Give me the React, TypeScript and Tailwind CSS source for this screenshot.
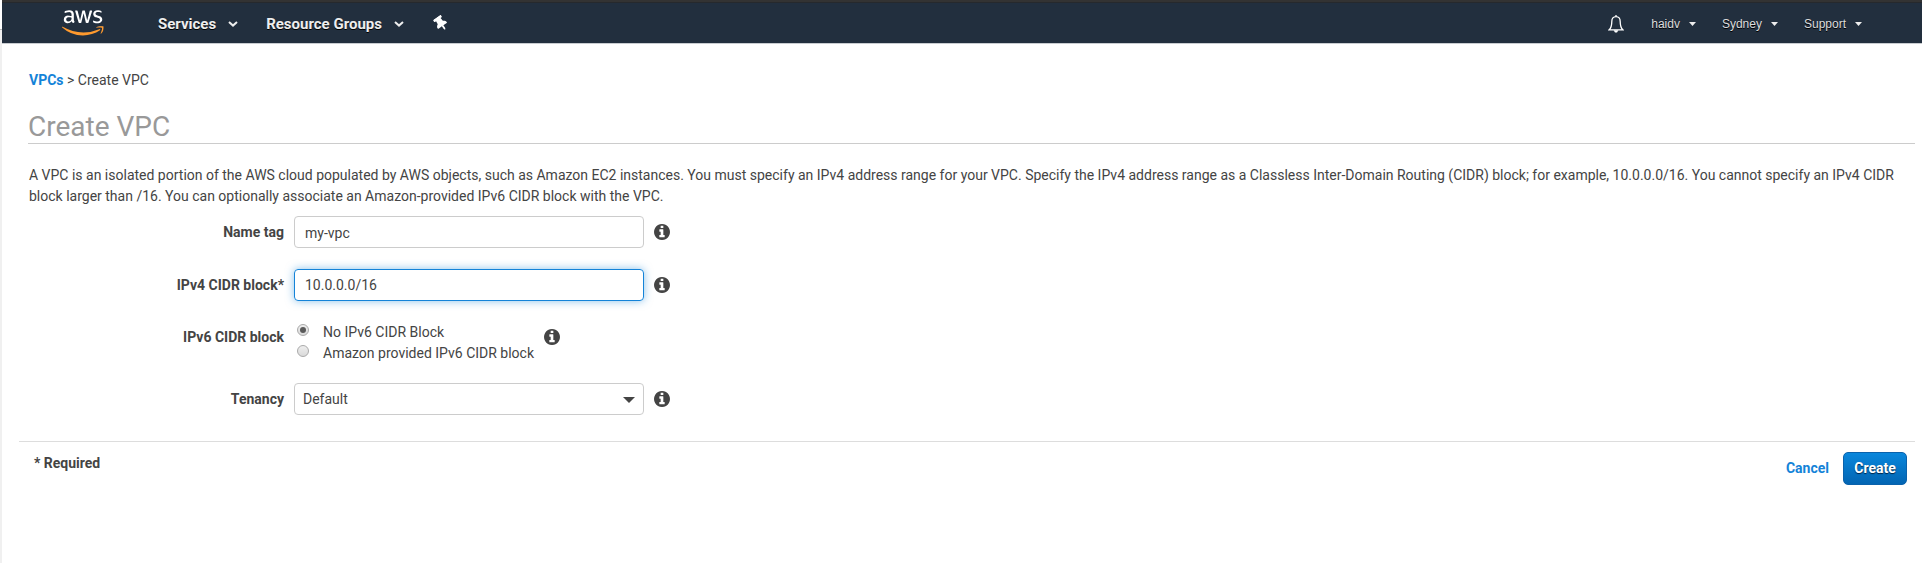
import { useState } from "react";
import type { ReactNode } from "react";
import { FaAws, FaThumbtack } from "react-icons/fa";

function Logo() {
  return (
    <div className="mb-[2px] ml-[0.5px] grid h-[34px] w-[42px]">
      <FaAws className="col-start-1 row-start-1 h-[33.6px] w-[42px] text-white [clip-path:inset(0_0_40%_0)]" />
      <FaAws className="col-start-1 row-start-1 h-[33.6px] w-[42px] text-[#ff9a2e] [clip-path:inset(60%_0_0_0)]" />
    </div>
  );
}

function Chevron() {
  return (
    <svg className="h-[6px] w-[10px]" viewBox="0 0 10 6" fill="none" stroke="#eee" strokeWidth="2">
      <path d="M1 1l4 3.6L9 1" />
    </svg>
  );
}

function Caret() {
  return (
    <svg className="h-[4px] w-[7px]" viewBox="0 0 7 4" fill="#eee">
      <path d="M0 0h7L3.5 4z" />
    </svg>
  );
}

function Bell() {
  return (
    <svg className="h-[18px] w-[16px]" viewBox="0 0 16 18" fill="none" stroke="#fff" strokeWidth="1.3">
      <path d="M8 1.6C5.2 1.6 3.8 3.6 3.8 6.5c0 4-.8 6.5-2.6 8.3h13.6c-1.8-1.8-2.6-4.3-2.6-8.3 0-2.9-1.4-4.9-4.2-4.9z" />
      <path d="M5.6 15.2h4.8L9 17.5H7z" fill="#fff" stroke="none" />
      <path d="M8 0v1.5" />
    </svg>
  );
}

function Row({ label, children, className, labelClassName = "" }: { label: string; children: ReactNode; className: string; labelClassName?: string }) {
  return (
    <div className={`flex items-center ${className}`}>
      <div className={`w-[266px] pr-[10px] text-right font-bold ${labelClassName}`}>{label}</div>
      {children}
    </div>
  );
}

function Info({ className = "ml-[10px]" }: { className?: string }) {
  return (
    <svg className={`size-4 ${className}`} viewBox="0 128 1536 1536" fill="currentColor">
      <path d="M1024 1376v-160q0-14-9-23t-23-9h-96v-512q0-14-9-23t-23-9h-320q-14 0-23 9t-9 23v160q0 14 9 23t23 9h96v320h-96q-14 0-23 9t-9 23v160q0 14 9 23t23 9h448q14 0 23-9t9-23zm-128-896v-160q0-14-9-23t-23-9h-192q-14 0-23 9t-9 23v160q0 14 9 23t23 9h192q14 0 23-9t9-23zm640 416q0 209-103 385.5t-279.5 279.5-385.5 103-385.5-103-279.5-279.5-103-385.5 103-385.5 279.5-279.5 385.5-103 385.5 103 279.5 279.5 103 385.5z" />
    </svg>
  );
}

function Radio({ checked, label, onSelect }: { checked: boolean; label: string; onSelect: () => void }) {
  return (
    <button type="button" role="radio" aria-checked={checked} onClick={onSelect} className="flex h-[21px] items-center">
      <span className="mb-[5px] ml-[3px] mr-[14px] grid size-[12px] place-items-center rounded-full border border-[#aaa] bg-linear-to-b from-[#eee] to-[#dadada]">
        {checked && <span className="size-[6px] rounded-full bg-[#5a5a5a]" />}
      </span>
      {label}
    </button>
  );
}

export default function App() {
  const [ipv6, setIpv6] = useState(false);
  return (
    <div className="flex h-[563px] overflow-hidden bg-white font-[Roboto,sans-serif] text-[14px] leading-[21px] text-[#444]">
      <div className="w-[2px] shrink-0 pt-[29px]">
        <div className="h-full border-t border-[#bbb] bg-[#f0f0f0]" />
      </div>
      <div className="min-w-0 flex-1">
        <header className="flex h-[44px] items-center border-b border-t-2 border-b-[#c8ccd0] border-t-[#333] bg-[#222f3e] pl-[59px] pr-[60px] pt-[3px] text-white shadow-[inset_0_1px_0_#26292d]">
          <Logo />
          <nav className="flex items-center text-[15px] font-bold text-[#eee] [text-shadow:0_1px_0_#000]">
            <span className="ml-[54.5px] mr-[12px]">Services</span>
            <Chevron />
            <span className="ml-[28px] mr-[12px]">Resource Groups</span>
            <Chevron />
            <FaThumbtack className="mb-[2px] ml-[31px] h-[15px] w-[12px] -rotate-[35deg] text-white" />
          </nav>
          <div className="ml-auto flex items-center font-['Liberation_Sans',sans-serif] text-[12px] text-[#ddd] [text-shadow:0_1px_0_#000]">
            <Bell />
            <span className="ml-[27px] mr-[9px]">haidv</span>
            <Caret />
            <span className="ml-[26px] mr-[9px]">Sydney</span>
            <Caret />
            <span className="ml-[26px] mr-[9px]">Support</span>
            <Caret />
          </div>
        </header>
        <main className="pl-[27px] pr-[7px]">
          <div className="pt-[26px]">
            <a className="font-bold text-[#1483d8]">VPCs</a> &gt; Create VPC
          </div>
          <h1 className="-ml-px mt-[20px] h-[33px] border-b border-[#ccc] text-[28px] leading-[31px] text-[#999]">Create VPC</h1>
          <p className="mt-[21px]">
            A VPC is an isolated portion of the AWS cloud populated by AWS objects, such as Amazon EC2 instances. You must specify an IPv4 address range for your VPC. Specify the IPv4 address range as a Classless Inter-Domain Routing (CIDR) block; for example, 10.0.0.0/16. You cannot specify an IPv4 CIDR block larger than /16. You can optionally associate an Amazon-provided IPv6 CIDR block with the VPC.
          </p>
          <Row label="Name tag" className="-ml-px mt-[9px] h-[32px]">
            <input defaultValue="my-vpc" className="h-[32px] w-[350px] rounded-[4px] border border-[#ccc] px-[10px] pt-[2px] outline-none" />
            <Info />
          </Row>
          <Row label="IPv4 CIDR block*" className="-ml-px mt-[21px] h-[32px]">
            <input defaultValue="10.0.0.0/16" className="h-[32px] w-[350px] rounded-[4px] border border-[#1483d8] px-[10px] shadow-[0_0_8px_rgba(20,131,216,0.5)] outline-none" />
            <Info />
          </Row>
          <Row label="IPv6 CIDR block" className="-ml-px mt-[20px] h-[42px]" labelClassName="mb-[10px]">
            <div role="radiogroup" className="mt-[2px]">
              <Radio checked={!ipv6} label="No IPv6 CIDR Block" onSelect={() => setIpv6(false)} />
              <Radio checked={ipv6} label="Amazon provided IPv6 CIDR block" onSelect={() => setIpv6(true)} />
            </div>
            <Info className="mb-[10px] ml-[10px]" />
          </Row>
          <Row label="Tenancy" className="-ml-px mt-[20px] h-[32px]">
            <button type="button" className="flex h-[32px] w-[350px] items-center justify-between rounded-[4px] border border-[#ccc] px-[8px]">
              Default
              <svg className="mt-[2px] h-[6px] w-[12px]" viewBox="0 0 12 6" fill="#444">
                <path d="M0 0h12L6 6z" />
              </svg>
            </button>
            <Info />
          </Row>
          <footer className="-ml-[10px] mt-[26px] flex items-start justify-between border-t border-[#ddd] pl-[15px] pr-[8px] pt-[10px] font-bold">
            <span className="pt-px">* Required</span>
            <div className="flex items-center">
              <a className="mr-[14px] text-[#1483d8]">Cancel</a>
              <button type="button" className="h-[33px] w-[64px] rounded-[5px] border border-[#0a62ac] bg-linear-to-b from-[#0a87dc] to-[#0365b3] font-bold text-white [text-shadow:0_1px_1px_#024]">
                Create
              </button>
            </div>
          </footer>
        </main>
      </div>
    </div>
  );
}
